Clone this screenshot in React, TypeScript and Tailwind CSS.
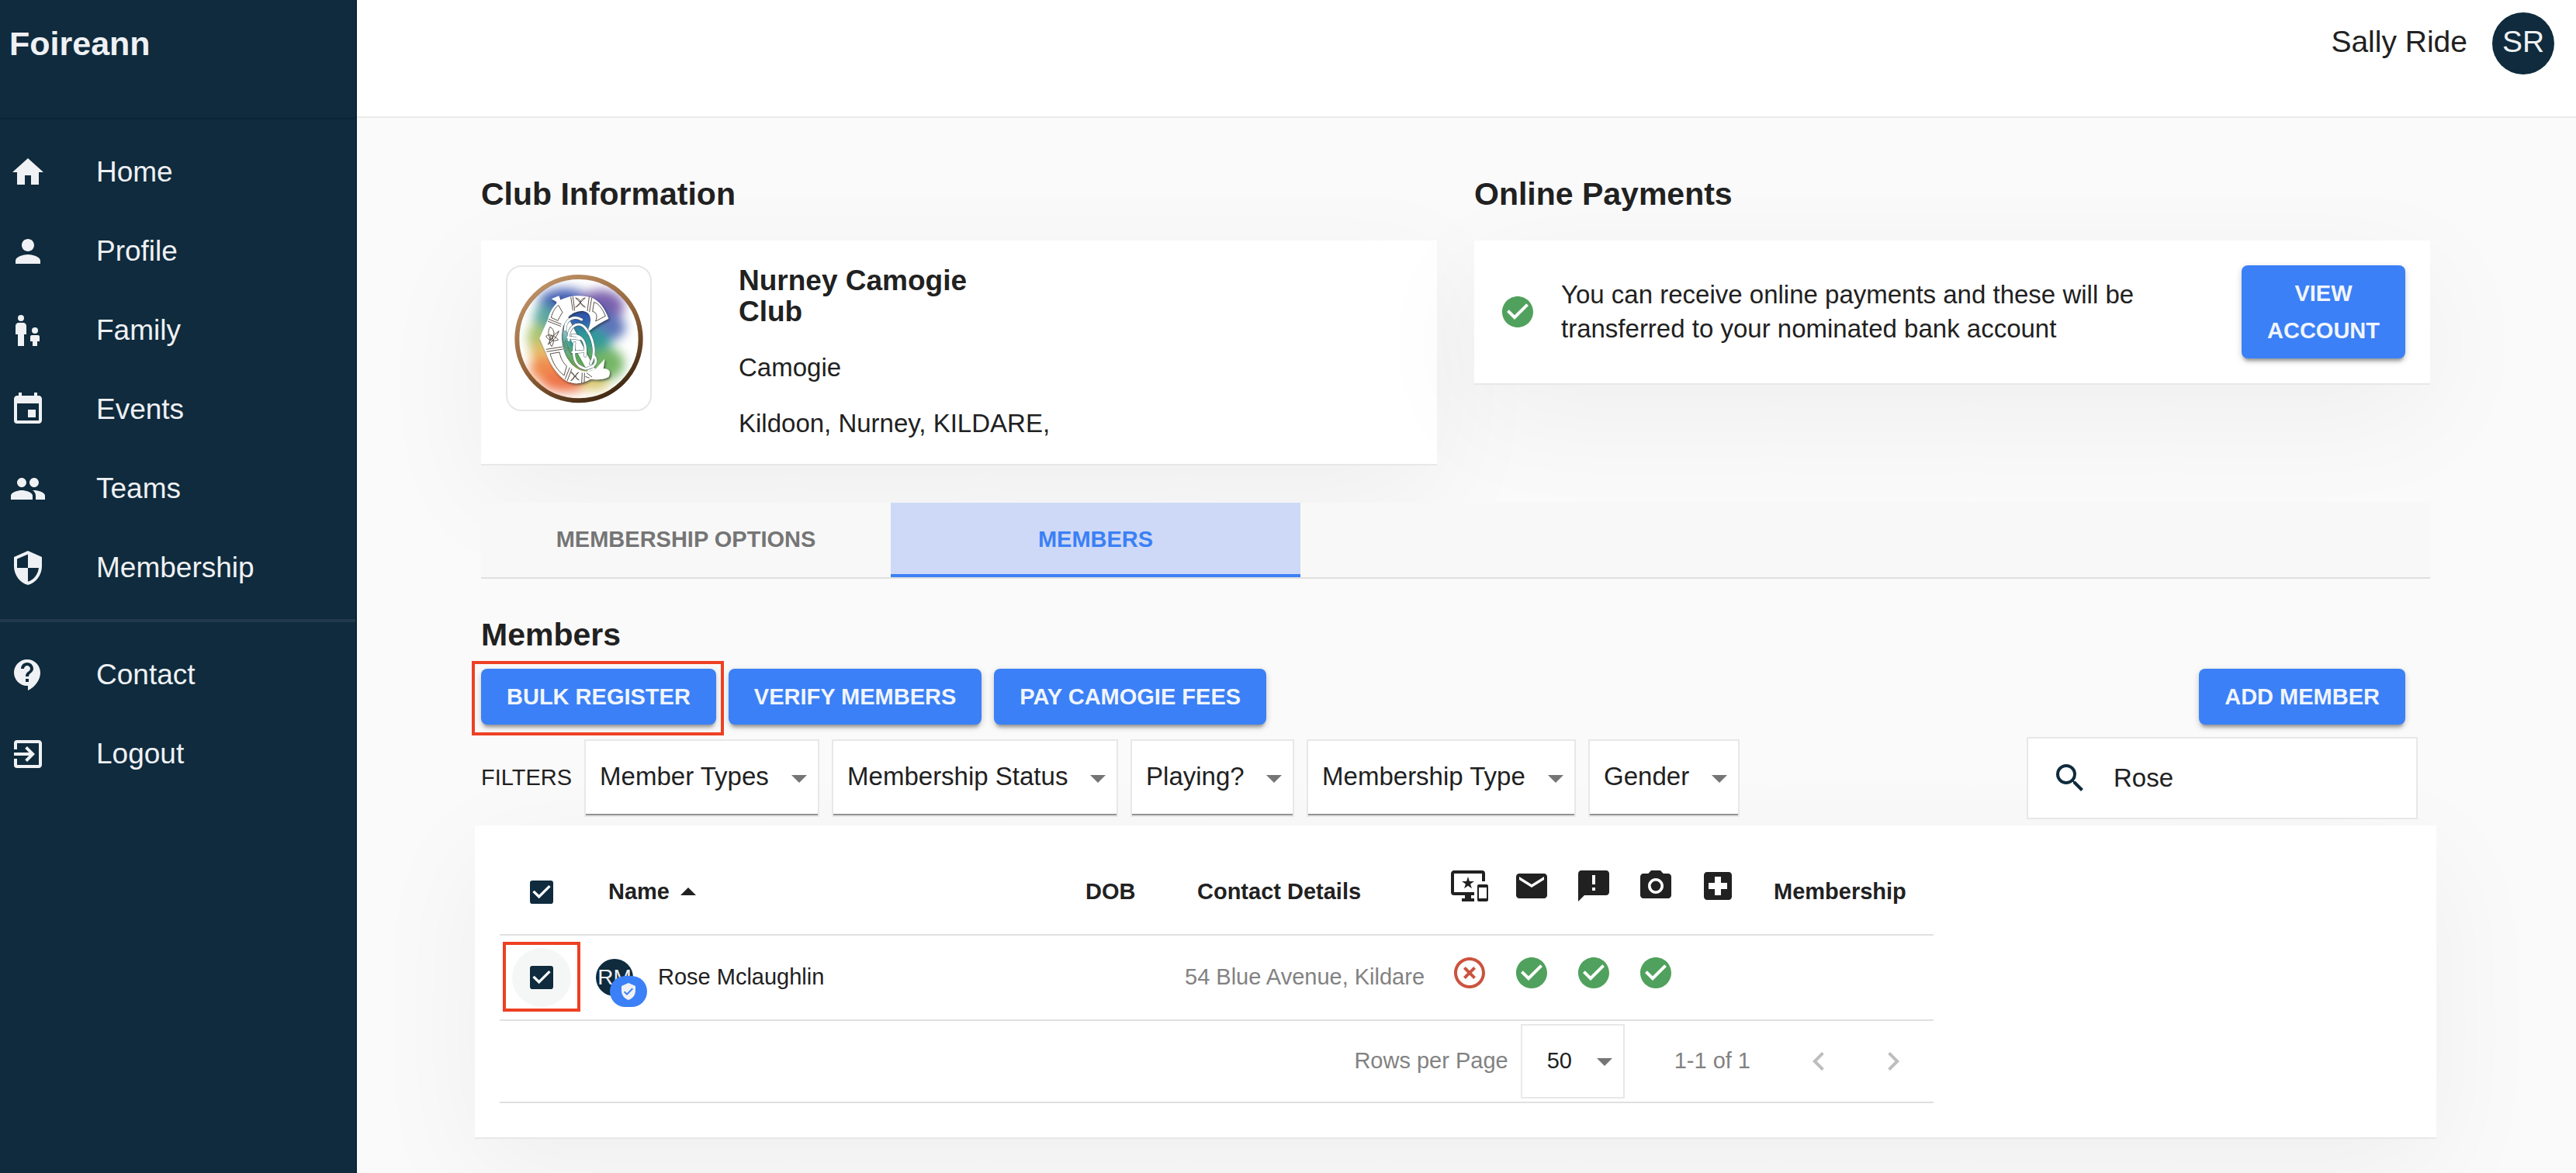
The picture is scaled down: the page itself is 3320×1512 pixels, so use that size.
import { useState } from "react"
import type { ReactNode } from "react"
import {
  MdAnnouncement,
  MdArrowDropDown,
  MdArrowDropUp,
  MdCameraAlt,
  MdCheckBox,
  MdCheckBoxOutlineBlank,
  MdCheckCircle,
  MdChevronLeft,
  MdChevronRight,
  MdContactSupport,
  MdEmail,
  MdEvent,
  MdExitToApp,
  MdHighlightOff,
  MdHome,
  MdImportantDevices,
  MdLocalHospital,
  MdPeople,
  MdPerson,
  MdSearch,
  MdSecurity,
  MdVerifiedUser,
} from "react-icons/md"

function FamilyIcon({ className }: { className?: string }) {
  return (
    <svg viewBox="0 0 24 24" fill="currentColor" className={className}>
      <circle cx="7.5" cy="4" r="2" />
      <path d="M6 7h3c1.1 0 2 .9 2 2v5.5H9.5V22h-4v-7.5H4V9c0-1.100.9-2 2-2z" />
      <circle cx="16.5" cy="12" r="2" />
      <path d="M14.500 15h4c.55 0 1 .45 1 1v3H18v3h-3v-3h-1.500v-3c0-.55.45-1 1-1z" />
    </svg>
  )
}

const mainLinks = [
  { label: "Home", icon: MdHome },
  { label: "Profile", icon: MdPerson },
  { label: "Family", icon: FamilyIcon },
  { label: "Events", icon: MdEvent },
  { label: "Teams", icon: MdPeople },
  { label: "Membership", icon: MdSecurity },
]

const otherLinks = [
  { label: "Contact", icon: MdContactSupport },
  { label: "Logout", icon: MdExitToApp },
]

const filters = ["Member Types", "Membership Status", "Playing?", "Membership Type", "Gender"]

const statusColumns = [
  { label: "Online account", icon: MdImportantDevices },
  { label: "Email", icon: MdEmail },
  { label: "Notices", icon: MdAnnouncement },
  { label: "Photo", icon: MdCameraAlt },
  { label: "Medical", icon: MdLocalHospital },
]

type NavLinkProps = {
  label: string
  icon: (props: { className?: string }) => ReactNode
}

function NavLink({ label, icon: Icon }: NavLinkProps) {
  return (
    <a href="#" className="flex items-center gap-16 h-[102px] pl-3 text-[37px] hover:bg-white/5">
      <Icon className="size-12" />
      {label}
    </a>
  )
}

function Sidebar() {
  return (
    <aside className="w-[460px] shrink-0 bg-[#0f2b3d] text-[#eff1f4] border-r-2 border-[#0b2434]">
      <div className="h-[154px] border-b-2 border-[#0c2536] pl-3 pt-8 text-[43px] leading-12 font-bold">
        Foireann
      </div>
      <nav className="py-[17px]">
        {mainLinks.map((link) => (
          <NavLink key={link.label} {...link} />
        ))}
        <hr className="mt-[15px] mb-[17px] border-t-4 border-[#23394b]" />
        {otherLinks.map((link) => (
          <NavLink key={link.label} {...link} />
        ))}
      </nav>
    </aside>
  )
}

function Card({ className = "", children }: { className?: string; children: ReactNode }) {
  return (
    <div
      className={`bg-white border-b-2 border-[#e8e8e8] shadow-[0_40px_150px_rgba(0,0,0,0.05)] ${className}`}
    >
      {children}
    </div>
  )
}

function Button({ className = "", children }: { className?: string; children: ReactNode }) {
  return (
    <button
      className={`px-[33px] py-3 rounded-lg bg-[#3b80f6] text-[#f1f5fe] text-[29px] leading-12 font-bold uppercase hover:bg-blue-600 shadow-[0_6px_4px_-3px_rgba(0,0,0,0.3),0_3px_8px_rgba(0,0,0,0.2)] ${className}`}
    >
      {children}
    </button>
  )
}

function Checkbox({ label }: { label: string }) {
  const [checked, setChecked] = useState(true)
  const Icon = checked ? MdCheckBox : MdCheckBoxOutlineBlank

  return (
    <span className="relative block size-10 text-[#0f2b3d]">
      <Icon className="size-10" />
      <input
        type="checkbox"
        aria-label={label}
        checked={checked}
        onChange={(e) => setChecked(e.target.checked)}
        className="absolute inset-0 size-10 appearance-none cursor-pointer"
      />
    </span>
  )
}

function FilterSelect({ label }: { label: string }) {
  return (
    <div className="relative border-2 border-[#e8e8e8] bg-white">
      <select
        aria-label={label}
        className="block h-24 appearance-none pl-[18px] pr-[62px] pb-0.5 text-[33px] border-b-2 border-[#929292]"
      >
        <option>{label}</option>
      </select>
      <MdArrowDropDown className="absolute right-0 top-6 size-12 text-[#757575] pointer-events-none" />
    </div>
  )
}

function Crest() {
  return (
    <svg viewBox="60 57 510 510" className="size-[170px]" role="img" aria-label="Club crest">
      <defs>
        <linearGradient id="rim" x1="0.2" y1="0" x2="0.8" y2="1">
          <stop offset="0" stopColor="#c09468" />
          <stop offset="0.5" stopColor="#94653a" />
          <stop offset="1" stopColor="#38220e" />
        </linearGradient>
        <filter id="soft" x="-50%" y="-50%" width="200%" height="200%">
          <feGaussianBlur stdDeviation="20" />
        </filter>
        <filter id="drop" x="-20%" y="-20%" width="140%" height="140%">
          <feDropShadow dx="4" dy="5" stdDeviation="4" floodColor="#1e2b30" floodOpacity="0.7" />
        </filter>
        <clipPath id="disc">
          <circle cx="315" cy="314" r="232" />
        </clipPath>
      </defs>
      <circle cx="315" cy="314" r="239" fill="#fff" stroke="url(#rim)" strokeWidth="18" />
      <g clipPath="url(#disc)">
        <g filter="url(#soft)">
          <ellipse cx="260" cy="175" rx="100" ry="55" fill="#4560b4" />
          <ellipse cx="400" cy="190" rx="90" ry="65" fill="#7c62ae" />
          <ellipse cx="350" cy="240" rx="90" ry="60" fill="#2f57ad" />
          <ellipse cx="430" cy="270" rx="65" ry="50" fill="#5b74ba" />
          <ellipse cx="185" cy="240" rx="45" ry="60" fill="#5aa7a0" />
          <ellipse cx="155" cy="310" rx="38" ry="55" fill="#a7c46c" />
          <ellipse cx="165" cy="365" rx="38" ry="40" fill="#e2b95e" />
          <ellipse cx="340" cy="330" rx="100" ry="60" fill="#2f9c98" />
          <ellipse cx="330" cy="400" rx="90" ry="50" fill="#5fae5a" />
          <ellipse cx="430" cy="410" rx="60" ry="60" fill="#74b566" />
          <ellipse cx="190" cy="430" rx="65" ry="50" fill="#f08a4e" />
          <ellipse cx="265" cy="478" rx="95" ry="42" fill="#ee7448" />
          <ellipse cx="375" cy="485" rx="55" ry="28" fill="#d8c66a" />
        </g>
      </g>
      <g filter="url(#drop)" fill="#fff" strokeLinejoin="round" strokeLinecap="round">
        <path d="M430 236C415 195 395 168 365 155C330 144 280 144 243 165C215 185 202 212 195 240L163 312L188 368C205 415 232 455 268 478C298 492 332 488 360 470C385 473 412 472 430 462C442 440 430 430 410 430L415 392L382 428C350 452 310 438 285 410C258 378 244 335 250 285C256 240 285 206 330 206C362 210 372 240 343 296C365 270 395 255 430 236Z" />
        <path d="M209 160L238 148L260 205L352 385L378 432L350 440L300 350L240 225L228 170Z" />
      </g>
      <g fill="none" stroke="#5b5048" strokeWidth="3">
        <path d="M284 152L292 205M292 151L299 205M355 152L348 207M365 156L356 210" />
        <path d="M198 238L248 258M195 246L246 266M188 355L252 345M190 364L254 354" />
        <path d="M280 425L262 470M288 430L270 477M328 445L326 486M337 446L336 484M340 460L356 466M345 446L366 462" />
        <path d="M374 172C398 182 408 204 418 226L380 246C388 226 384 212 368 208Z" />
        <path d="M208 232C214 208 224 194 236 184L252 212C242 226 238 236 234 244Z" />
        <path d="M204 372C215 410 232 436 258 456L268 420C252 404 244 386 240 366Z" />
        <path d="M302 156L340 192M340 156L302 192M302 156C326 160 326 184 302 192M340 156C316 160 316 184 340 192" />
        <path d="M282 442L316 474M314 444L284 476M282 442C300 446 304 470 284 476M314 444C300 450 298 468 316 474" />
        <path d="M188 304C200 294 218 300 236 318C216 326 198 322 188 304ZM204 268C222 280 224 300 208 318C196 302 194 284 204 268ZM238 284C230 306 216 322 196 336C206 314 220 296 238 284ZM208 300C218 314 220 330 210 344C200 330 200 314 208 300Z" />
      </g>
      <g fill="none" strokeLinecap="round">
        <g stroke="#3f5a60" strokeWidth="12">
          <path d="M262 280C260 240 295 222 326 240M276 320C270 270 310 240 340 272C372 310 384 370 360 410M290 300C330 300 345 330 340 380M298 330C290 390 300 420 340 430C380 425 390 400 372 378M290 366L340 362M272 308L320 314" />
        </g>
        <g stroke="#fff" strokeWidth="9">
          <path d="M262 280C260 240 295 222 326 240M276 320C270 270 310 240 340 272C372 310 384 370 360 410M290 300C330 300 345 330 340 380M298 330C290 390 300 420 340 430C380 425 390 400 372 378M290 366L340 362M272 308L320 314" />
        </g>
        <path
          d="M254 326C270 330 252 346 268 350C284 348 270 366 288 374M262 320L276 352L264 362"
          stroke="#5c7a3c"
          strokeWidth="3"
        />
      </g>
    </svg>
  )
}

function ClubInformation() {
  return (
    <section>
      <h2 className="mb-9 text-[41px] leading-12 font-bold">Club Information</h2>
      <Card className="flex items-start gap-28 p-8">
        <div className="flex size-[188px] shrink-0 items-center justify-center rounded-[20px] border-2 border-[#e6e6e6]">
          <Crest />
        </div>
        <div className="flex flex-col gap-8 text-[33px] leading-10">
          <h3 className="max-w-80 text-[37px] leading-10 font-bold">Nurney Camogie Club</h3>
          <p>Camogie</p>
          <p>Kildoon, Nurney, KILDARE,</p>
        </div>
      </Card>
    </section>
  )
}

function OnlinePayments() {
  return (
    <section>
      <h2 className="mb-9 text-[41px] leading-12 font-bold">Online Payments</h2>
      <Card className="flex items-center p-8">
        <MdCheckCircle className="size-12 shrink-0 text-[#50a15d]" />
        <p className="ml-8 max-w-[800px] text-[33px] leading-11">
          You can receive online payments and these will be transferred to your nominated bank account
        </p>
        <Button className="ml-auto w-min">View Account</Button>
      </Card>
    </section>
  )
}

function MembersTable() {
  return (
    <Card className="-mx-2 mt-2 px-8 pt-8 pb-11">
      <table className="w-3/4 table-fixed text-left text-[29px]">
        <colgroup>
          <col className="w-[108px]" />
          <col />
          <col className="w-36" />
          <col className="w-[343px]" />
          <col className="w-20" />
          <col className="w-20" />
          <col className="w-20" />
          <col className="w-20" />
          <col className="w-20" />
          <col className="w-[238px]" />
        </colgroup>
        <thead>
          <tr className="h-[109px] border-b-2 border-[#e0e0e0]">
            <th className="pl-[34px]">
              <Checkbox label="Select all members" />
            </th>
            <th className="px-8">
              <button className="flex items-center">
                Name
                <MdArrowDropUp className="size-12" />
              </button>
            </th>
            <th className="px-8">DOB</th>
            <th className="px-8">Contact Details</th>
            {statusColumns.map(({ label, icon: Icon }) => (
              <th key={label} className="px-4 pb-4">
                <Icon className="size-12" title={label} />
              </th>
            ))}
            <th className="px-8">Membership</th>
          </tr>
        </thead>
        <tbody>
          <tr className="h-[110px] border-b-2 border-[#e0e0e0]">
            <td>
              <div className="relative mx-auto flex size-[76px] items-center justify-center rounded-full bg-[#f5f7f7]">
                <Checkbox label="Select Rose Mclaughlin" />
                <span className="absolute -top-2 -bottom-1.5 -left-3 -right-3 border-4 border-[#ee4023] pointer-events-none" />
              </div>
            </td>
            <td className="px-4">
              <div className="flex items-center gap-8">
                <div className="relative flex size-12 items-center justify-center rounded-full bg-[#0f2b3d] text-[28px] text-[#eff1f4]">
                  RM
                  <span className="absolute top-[22px] left-[18px] flex h-10 w-12 items-center justify-center rounded-[20px] bg-[#3b80f6]">
                    <MdVerifiedUser className="size-6" />
                  </span>
                </div>
                Rose Mclaughlin
              </div>
            </td>
            <td />
            <td className="px-4 text-[#828282] whitespace-nowrap">54 Blue Avenue, Kildare</td>
            <td className="px-4 pb-3">
              <MdHighlightOff className="size-12 text-[#cb533e]" />
            </td>
            {["email", "notices", "photo"].map((key) => (
              <td key={key} className="px-4 pb-3">
                <MdCheckCircle className="size-12 text-[#50a15d]" />
              </td>
            ))}
            <td />
            <td />
          </tr>
        </tbody>
        <tfoot>
          <tr className="h-[106px] border-b-2 border-[#e0e0e0]">
            <td colSpan={10}>
              <div className="flex items-center justify-end pr-7 text-[#828282]">
                <label htmlFor="rows">Rows per Page</label>
                <div className="relative ml-4 border-2 border-[#e8e8e8] text-[#212121]">
                  <select id="rows" className="block h-[92px] w-[130px] appearance-none pl-8">
                    <option>50</option>
                  </select>
                  <MdArrowDropDown className="absolute right-0 top-[22px] size-12 text-[#757575] pointer-events-none" />
                </div>
                <span className="ml-16">1-1 of 1</span>
                <button aria-label="Previous page" className="ml-16 text-[#bdbdbd]">
                  <MdChevronLeft className="size-12" />
                </button>
                <button aria-label="Next page" className="ml-12 text-[#bdbdbd]">
                  <MdChevronRight className="size-12" />
                </button>
              </div>
            </td>
          </tr>
        </tfoot>
      </table>
    </Card>
  )
}

export default function App() {
  const [search, setSearch] = useState("Rose")

  return (
    <div className="flex min-h-screen bg-[#fafafa] text-[#212121] font-['Liberation_Sans',Arial,sans-serif]">
      <Sidebar />

      <div className="flex-1 min-w-0">
        <header className="flex h-[152px] items-start justify-end border-b-2 border-[#ebebeb] bg-white pt-4 pr-7">
          <div className="flex items-center gap-8 text-[39px]">
            <span className="pb-1 leading-12">Sally Ride</span>
            <div className="flex size-20 items-center justify-center rounded-full bg-[#0f2b3d] pb-1 text-[#eff1f4]">
              SR
            </div>
          </div>
        </header>

        <main className="pl-40 pr-[188px] pt-[74px]">
          <div className="grid grid-cols-2 items-start gap-12">
            <ClubInformation />
            <OnlinePayments />
          </div>

          <div role="tablist" className="relative mt-12 flex border-b-2 border-[#dfdfdf] bg-[#f8f8f8] text-[29px] font-bold">
            <button role="tab" aria-selected="false" className="h-24 w-[528px] text-[#757575]">
              MEMBERSHIP OPTIONS
            </button>
            <button
              role="tab"
              aria-selected="true"
              className="h-24 w-[528px] pt-1 border-b-4 border-[#3b80f6] bg-[#ced9f7] text-[#3b80f6]"
            >
              MEMBERS
            </button>
          </div>

          <h2 className="mt-12 text-[41px] leading-12 font-bold">Members</h2>

          <div className="mt-5 flex gap-4 pr-8">
            <div className="relative">
              <Button>Bulk Register</Button>
              <span className="absolute -top-2.5 -bottom-3.5 -left-3 -right-2.5 border-4 border-[#ee4023] pointer-events-none" />
            </div>
            <Button>Verify Members</Button>
            <Button>Pay Camogie Fees</Button>
            <Button className="ml-auto">Add Member</Button>
          </div>

          <div className="mt-4 flex items-center gap-4 pr-4">
            <span className="text-[29px]">FILTERS</span>
            {filters.map((label) => (
              <FilterSelect key={label} label={label} />
            ))}
            <label className="ml-auto flex h-[106px] w-[504px] items-center gap-8 border-2 border-[#e8e8e8] bg-white px-[30px]">
              <MdSearch className="size-12 shrink-0 text-[#0f2b3d]" />
              <input
                type="text"
                aria-label="Search members"
                value={search}
                onChange={(e) => setSearch(e.target.value)}
                className="w-full min-w-0 text-[33px] outline-none"
              />
            </label>
          </div>

          <MembersTable />
        </main>
      </div>
    </div>
  )
}
